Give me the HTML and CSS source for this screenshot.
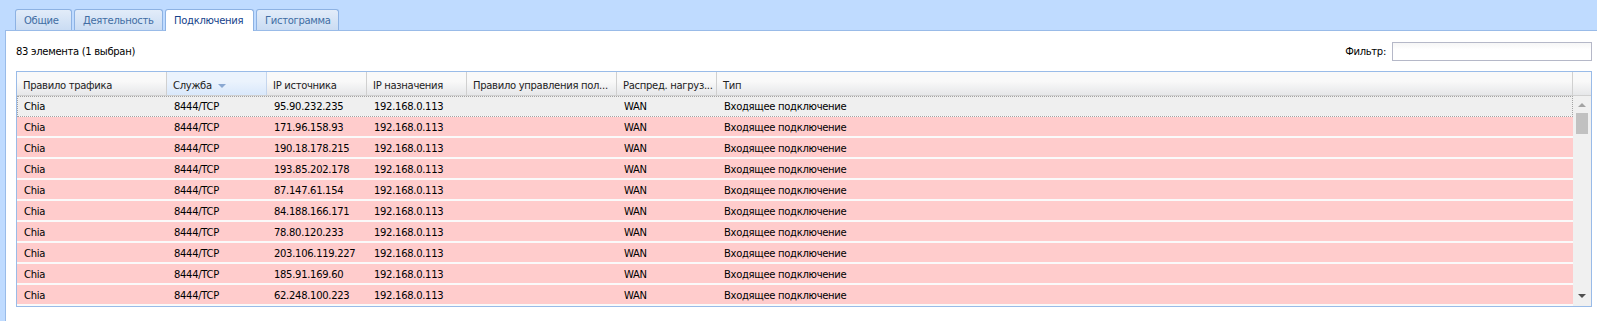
FILE: index.html
```html
<!DOCTYPE html>
<html lang="ru">
<head>
    <meta charset="UTF-8">
    <title>Подключения</title>
    <link rel="stylesheet" href="styles.css">
</head>
<body>
    <div class="tabs">
        <div class="tab">Общие</div>
        <div class="tab">Деятельность</div>
        <div class="tab active">Подключения</div>
        <div class="tab">Гистограмма</div>
    </div>
    <div class="panel">
        <div class="toolbar">
            <span class="count">83 элемента (1 выбран)</span>
            <label class="filter">Фильтр: <input type="text"></label>
        </div>
        <div class="grid">
            <div class="grid-head">
                <div class="hcell w150">Правило трафика</div>
                <div class="hcell w100 sorted">Служба <span class="sort-arrow"></span></div>
                <div class="hcell w100">IP источника</div>
                <div class="hcell w100">IP назначения</div>
                <div class="hcell w150">Правило управления пол...</div>
                <div class="hcell w100">Распред. нагруз...</div>
                <div class="hcell fill">Тип</div>
                <div class="hcell filler"></div>
            </div>
            <div class="grid-body">
                <div class="rows">
                    <div class="row selected"><div class="cell w150">Chia</div><div class="cell w100">8444/TCP</div><div class="cell w100">95.90.232.235</div><div class="cell w100">192.168.0.113</div><div class="cell w150"></div><div class="cell w100">WAN</div><div class="cell fill">Входящее подключение</div></div>
                    <div class="row"><div class="cell w150">Chia</div><div class="cell w100">8444/TCP</div><div class="cell w100">171.96.158.93</div><div class="cell w100">192.168.0.113</div><div class="cell w150"></div><div class="cell w100">WAN</div><div class="cell fill">Входящее подключение</div></div>
                    <div class="row"><div class="cell w150">Chia</div><div class="cell w100">8444/TCP</div><div class="cell w100">190.18.178.215</div><div class="cell w100">192.168.0.113</div><div class="cell w150"></div><div class="cell w100">WAN</div><div class="cell fill">Входящее подключение</div></div>
                    <div class="row"><div class="cell w150">Chia</div><div class="cell w100">8444/TCP</div><div class="cell w100">193.85.202.178</div><div class="cell w100">192.168.0.113</div><div class="cell w150"></div><div class="cell w100">WAN</div><div class="cell fill">Входящее подключение</div></div>
                    <div class="row"><div class="cell w150">Chia</div><div class="cell w100">8444/TCP</div><div class="cell w100">87.147.61.154</div><div class="cell w100">192.168.0.113</div><div class="cell w150"></div><div class="cell w100">WAN</div><div class="cell fill">Входящее подключение</div></div>
                    <div class="row"><div class="cell w150">Chia</div><div class="cell w100">8444/TCP</div><div class="cell w100">84.188.166.171</div><div class="cell w100">192.168.0.113</div><div class="cell w150"></div><div class="cell w100">WAN</div><div class="cell fill">Входящее подключение</div></div>
                    <div class="row"><div class="cell w150">Chia</div><div class="cell w100">8444/TCP</div><div class="cell w100">78.80.120.233</div><div class="cell w100">192.168.0.113</div><div class="cell w150"></div><div class="cell w100">WAN</div><div class="cell fill">Входящее подключение</div></div>
                    <div class="row"><div class="cell w150">Chia</div><div class="cell w100">8444/TCP</div><div class="cell w100">203.106.119.227</div><div class="cell w100">192.168.0.113</div><div class="cell w150"></div><div class="cell w100">WAN</div><div class="cell fill">Входящее подключение</div></div>
                    <div class="row"><div class="cell w150">Chia</div><div class="cell w100">8444/TCP</div><div class="cell w100">185.91.169.60</div><div class="cell w100">192.168.0.113</div><div class="cell w150"></div><div class="cell w100">WAN</div><div class="cell fill">Входящее подключение</div></div>
                    <div class="row"><div class="cell w150">Chia</div><div class="cell w100">8444/TCP</div><div class="cell w100">62.248.100.223</div><div class="cell w100">192.168.0.113</div><div class="cell w150"></div><div class="cell w100">WAN</div><div class="cell fill">Входящее подключение</div></div>
                </div>
                <div class="scrollbar">
                    <span class="arrow-up"></span>
                    <span class="thumb"></span>
                    <span class="arrow-down"></span>
                </div>
            </div>
        </div>
    </div>
</body>
</html>
```

FILE: styles.css
```css
body {
    margin: 0;
    background-color: #bfdbff;
    font-family: "DejaVu Sans", Verdana, sans-serif;
    font-size: 10px;
    letter-spacing: -0.3px;
    color: #000;
    height: 321px;
    display: flex;
    flex-direction: column;
    overflow: hidden;
}
.tabs {
    display: flex;
    gap: 2px;
    padding: 9px 0 0 15px;
    height: 21px;
}
.tab {
    height: 20px;
    line-height: 22px;
    padding: 0 8px;
    border: 1px solid #8db2e3;
    border-bottom: none;
    border-radius: 3px 3px 0 0;
    background: linear-gradient(#e2ecf9, #cadcf3);
    color: #416da3;
}
.tab:nth-child(1) { width: 39px; }
.tab:nth-child(2) { width: 71px; }
.tab:nth-child(3) { width: 71px; }
.tab:nth-child(4) { width: 65px; }
.tab.active {
    background: #ffffff;
    color: #15428b;
    height: 21px;
    position: relative;
    margin-bottom: -1px;
}
.panel {
    flex: 1;
    margin-left: 5px;
    border-left: 1px solid #99bbe8;
    border-top: 1px solid #99bbe8;
    background-color: #ffffff;
    padding: 0 5px 0 10px;
}
.toolbar {
    display: flex;
    justify-content: space-between;
    align-items: center;
    height: 19px;
    padding: 11px 0 10px 0;
}
.filter {
    display: flex;
    align-items: center;
    gap: 6px;
}
.filter input {
    width: 198px;
    height: 17px;
    margin: 0;
    padding: 0;
    border: 1px solid #b5b8c8;
    background: linear-gradient(#f6f6f6, #ffffff 40%);
    box-sizing: content-box;
}
.grid {
    border: 1px solid #99bbe8;
}
.grid-head {
    display: flex;
    height: 23px;
    border-bottom: 1px solid #d0d0d0;
    background: linear-gradient(#f9f9f9, #f9f9f9 40%, #e6e7e9);
    color: #222;
}
.hcell {
    box-sizing: border-box;
    padding: 3px 6px 0 6px;
    line-height: 22px;
    border-right: 1px solid #d0d0d0;
    white-space: nowrap;
    overflow: hidden;
}
.hcell.sorted {
    background: linear-gradient(#ebf3fd, #ebf3fd 40%, #d9e8fb);
    border-right-color: #c5d6ee;
}
.sort-arrow {
    display: inline-block;
    width: 0;
    height: 0;
    margin-left: 3px;
    vertical-align: 1px;
    border-left: 4px solid transparent;
    border-right: 4px solid transparent;
    border-top: 4px solid #8aa8d2;
}
.hcell.filler {
    width: 18px;
    border-right: none;
}
.w150 { width: 150px; flex: none; }
.w100 { width: 100px; flex: none; }
.fill { flex: 1; }
.grid-body {
    display: flex;
}
.rows {
    flex: 1;
}
.row {
    display: flex;
    height: 19px;
    line-height: 21px;
    background-color: #ffcccc;
    border-bottom: 2px solid #fafafa;
}
.row.selected {
    background-color: #efefef;
    outline: 1px dotted #a3a3a3;
    outline-offset: -1px;
    height: 20px;
    border-bottom-width: 1px;
}
.cell {
    box-sizing: border-box;
    padding: 0 7px;
    white-space: nowrap;
    overflow: hidden;
}
.scrollbar {
    width: 18px;
    flex: none;
    background-color: #f0f0f0;
    display: flex;
    flex-direction: column;
    align-items: center;
}
.arrow-up {
    margin-top: 7px;
    width: 0;
    height: 0;
    border-left: 4px solid transparent;
    border-right: 4px solid transparent;
    border-bottom: 4px solid #a3a3a3;
}
.thumb {
    margin-top: 6px;
    width: 12px;
    height: 21px;
    background-color: #c1c1c1;
}
.arrow-down {
    margin-top: auto;
    margin-bottom: 8px;
    width: 0;
    height: 0;
    border-left: 4px solid transparent;
    border-right: 4px solid transparent;
    border-top: 4px solid #505050;
}
```
